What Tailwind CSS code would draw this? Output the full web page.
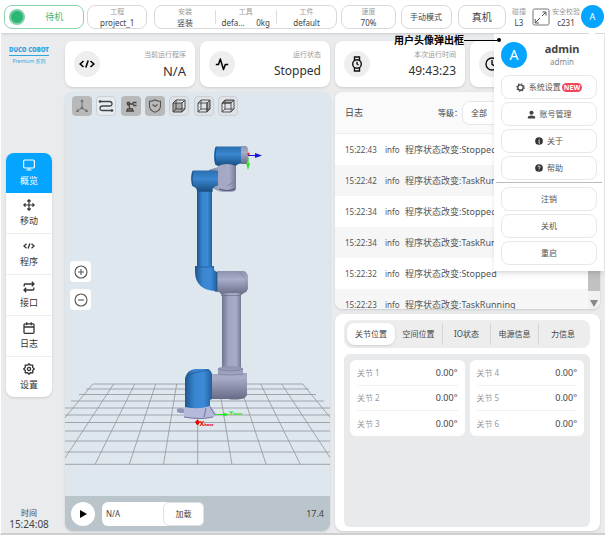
<!DOCTYPE html>
<html lang="zh-CN">
<head>
    <meta charset="UTF-8">
    <meta name="viewport" content="width=device-width, initial-scale=1.0">
    <title>DUCO COBOT</title>
    <script src="https://cdn.jsdelivr.net/npm/@tailwindcss/browser@4"></script>
</head>
<body class="h-screen min-h-[480px] flex flex-col overflow-hidden bg-[#e9ebed] text-[#444] text-[9px] leading-3 font-['Noto_Sans','Noto_Sans_CJK_SC',sans-serif] border-l border-white border-b-2 border-b-[#cfcfcf]">
    <!-- Thanh trạng thái -->
    <header class="relative flex h-[33px] shrink-0 items-center bg-white pl-[3px] pr-px text-center shadow-sm">
        <div class="flex h-6 min-w-0 flex-[77] items-center rounded-lg border border-[#8fd3ae] pl-[4px]">
            <span class="size-4 shrink-0 rounded-full border-2 border-[#7fd0a8] bg-[#2bb673]"></span>
            <span class="flex-1 text-[#3fb67c]">待机</span>
        </div>
        <div class="ml-[3px] flex h-6 min-w-0 flex-[60] flex-col justify-center rounded-lg border border-[#d9d9d9] leading-[11px]">
            <span class="text-[7px] text-[#999]">工程</span>
            <span class="text-[8px]">project_1</span>
        </div>
        <div class="ml-[7px] flex h-6 min-w-0 flex-[188] items-center rounded-lg border border-[#d9d9d9] leading-[11px]">
            <div class="flex flex-1 flex-col">
                <span class="text-[7px] text-[#999]">安装</span>
                <span class="text-[8px]">竖装</span>
            </div>
            <span class="h-[14px] w-px bg-[#ddd]"></span>
            <div class="flex flex-1 flex-col">
                <span class="text-[7px] text-[#999]">工具</span>
                <span class="flex justify-around text-[8px]"><span>defa...</span><span>0kg</span></span>
            </div>
            <span class="h-[14px] w-px bg-[#ddd]"></span>
            <div class="flex flex-1 flex-col">
                <span class="text-[7px] text-[#999]">工件</span>
                <span class="text-[8px]">default</span>
            </div>
        </div>
        <div class="ml-[4px] flex h-6 min-w-0 flex-[54] flex-col justify-center rounded-lg border border-[#d9d9d9] leading-[11px]">
            <span class="text-[7px] text-[#999]">速度</span>
            <span class="text-[8px]">70%</span>
        </div>
        <button class="ml-[5px] h-6 min-w-0 flex-[51] whitespace-nowrap rounded-lg border border-[#d9d9d9] text-[8px]">手动模式</button>
        <button class="ml-[6px] h-6 min-w-0 flex-[48] whitespace-nowrap rounded-lg border border-[#d9d9d9] text-[10px]">真机</button>
        <div class="ml-[5px] flex w-4 flex-col whitespace-nowrap leading-[11px]">
            <span class="text-[7px] text-[#999]">碰撞</span>
            <span class="text-[8px]">L3</span>
        </div>
        <svg class="ml-[5px] size-[18px] shrink-0" viewBox="0 0 18 18" fill="none" stroke="#555">
            <rect x="1" y="1" width="16" height="16" rx="1.5" stroke="#777" />
            <path d="M10 8l4-4M10.500 4H14v3.500M8 10l-5 5M3.200 11v4H7" />
        </svg>
        <div class="ml-px flex w-[30px] flex-col whitespace-nowrap leading-[11px]">
            <span class="text-[7px] text-[#999]">安全校验</span>
            <span class="text-[8px]">c231</span>
        </div>
        <button class="size-[23px] shrink-0 rounded-full bg-[#05a5ff] text-[9px] text-white">A</button>

        <!-- Menu người dùng -->
        <div class="absolute right-px top-[34px] z-20 w-[110px] bg-white shadow-md">
            <span class="absolute right-2 top-[-2px] size-2 rotate-45 bg-white"></span>
            <div class="absolute right-[103px] top-0 flex items-center whitespace-nowrap text-[10px] font-bold text-black">
                用户头像弹出框
                <span class="h-px w-[33px] bg-black"></span>
                <span class="size-1 rounded-full bg-black"></span>
            </div>
            <div class="flex items-center px-[7px] pt-[7px]">
                <span class="flex size-[26px] items-center justify-center rounded-full bg-[#05a5ff] text-[14px] text-white">A</span>
                <div class="flex-1">
                    <p class="text-[11px] font-bold leading-[15px]">admin</p>
                    <p class="text-[8px] text-[#888]">admin</p>
                </div>
            </div>
            <div class="flex flex-col gap-[3px] px-[7px] pt-[7px] pb-[2px] text-[8px] text-[#555]">
                <button class="flex h-6 items-center justify-center gap-1 rounded-lg border border-[#e6e8eb]">
                    <svg class="size-[9px]" viewBox="0 0 10 10" fill="none" stroke="#444"><circle cx="5" cy="5" r="3" stroke-width="1.500" /><circle cx="5" cy="5" r="4.200" stroke-width="1.200" stroke-dasharray="1.500 1.800" /></svg>
                    <span>系统设置</span>
                    <span class="-ml-[3px] rounded-full bg-[#f5455c] px-[2px] text-[7px] font-bold leading-[9px] text-white">NEW</span>
                </button>
                <button class="flex h-6 items-center justify-center gap-1 rounded-lg border border-[#e6e8eb]">
                    <svg class="size-[9px]" viewBox="0 0 10 10" fill="#444"><circle cx="5" cy="3" r="2.300" /><path d="M1 9.500V8q0-2 4-2t4 2v1.500z" /></svg>
                    <span>账号管理</span>
                </button>
                <button class="flex h-6 items-center justify-center gap-1 rounded-lg border border-[#e6e8eb]">
                    <svg class="size-[8px]" viewBox="0 0 10 10"><circle cx="5" cy="5" r="4.800" fill="#333" /><path d="M5.500 2v1.200M4.200 4.500h1.200L5 7.800h1" stroke="#fff" fill="none" /></svg>
                    <span>关于</span>
                </button>
                <button class="flex h-6 items-center justify-center gap-1 rounded-lg border border-[#e6e8eb]">
                    <svg class="size-[8px]" viewBox="0 0 10 10"><circle cx="5" cy="5" r="4.800" fill="#333" /><path d="M3.500 4q0-1.500 1.500-1.500T6.500 4Q6.500 4.800 5 5.300v.7M5 7v1" stroke="#fff" fill="none" /></svg>
                    <span>帮助</span>
                </button>
            </div>
            <hr class="mx-0.5 border-[#bbb]">
            <div class="flex flex-col gap-[3px] px-[7px] pt-[4px] pb-[6px] text-[8px] text-[#555]">
                <button class="h-6 rounded-lg border border-[#e6e8eb]">注销</button>
                <button class="h-6 rounded-lg border border-[#e6e8eb]">关机</button>
                <button class="h-6 rounded-lg border border-[#e6e8eb]">重启</button>
            </div>
        </div>
    </header>

    <div class="flex min-h-0 flex-1">
        <!-- Thanh bên -->
        <aside class="flex w-16 shrink-0 flex-col items-center justify-between pt-[13px] pb-[3px] pr-2">
            <div class="text-center text-[#2ea5df]">
                <p class="border-b border-[#2ea5df] whitespace-nowrap text-[6px] font-black leading-[9px]">DUCO COBOT</p>
                <p class="whitespace-nowrap text-[5px] leading-[11px]">Premium 系列</p>
            </div>
            <nav class="mb-6 w-[46px] overflow-hidden rounded-lg bg-white text-center text-[#333] shadow-sm">
                <a href="#" class="flex h-10 flex-col items-center justify-center gap-1 bg-[#05a5ff] text-white">
                    <svg class="size-3" viewBox="0 0 12 12" fill="none" stroke="currentColor" stroke-width="1.200"><rect x=".6" y="1" width="10.800" height="8" rx="1.200" /><path d="M6 9v2M3.500 11h5" /></svg>
                    概览
                </a>
                <a href="#" class="flex h-[41px] flex-col items-center justify-center gap-1 border-b border-[#eee]">
                    <svg class="size-3" viewBox="0 0 12 12" fill="none" stroke="currentColor" stroke-width="1.200"><path d="M6 .8v10.400M.8 6h10.400M4.300 2.500L6 .8l1.700 1.700M4.300 9.500L6 11.200l1.700-1.700M2.500 4.300L.8 6l1.700 1.700M9.500 4.300L11.200 6 9.500 7.700" /></svg>
                    移动
                </a>
                <a href="#" class="flex h-[41px] flex-col items-center justify-center gap-1 border-b border-[#eee]">
                    <svg class="size-3" viewBox="0 0 12 12" fill="none" stroke="currentColor" stroke-width="1.300"><path d="M3.500 3.800L.9 6l2.600 2.200M8.500 3.800L11.100 6 8.500 8.200M6.900 3.500l-1.800 5" /></svg>
                    程序
                </a>
                <a href="#" class="flex h-[41px] flex-col items-center justify-center gap-1 border-b border-[#eee]">
                    <svg class="size-3" viewBox="0 0 12 12" fill="none" stroke="currentColor" stroke-width="1.300"><path d="M1.200 5.500V3.800q0-.8.8-.8h9M8.800.8L11 3 8.800 5.200M10.800 6.500v1.700q0 .8-.8.800H1M3.200 6.800L1 9l2.200 2.200" /></svg>
                    接口
                </a>
                <a href="#" class="flex h-[41px] flex-col items-center justify-center gap-1 border-b border-[#eee]">
                    <svg class="size-3" viewBox="0 0 12 12" fill="none" stroke="currentColor" stroke-width="1.300"><rect x="1" y="1.800" width="10" height="9.500" rx="1" /><path d="M1 5h10M3.800.3v3M8.200.3v3" /></svg>
                    日志
                </a>
                <a href="#" class="flex h-10 flex-col items-center justify-center gap-1">
                    <svg class="size-3" viewBox="0 0 12 12" fill="none" stroke="currentColor" stroke-width="1.300"><path d="M6 .7l1.400 1.500 2.300-.1-.1 2.300L11.300 6 9.700 7.500l.1 2.300-2.400-.1L6 11.300 4.600 9.700l-2.400.1.100-2.300L.7 6l1.600-1.600-.1-2.300 2.400.1z" stroke-linejoin="round" /><circle cx="6" cy="6" r="1.600" /></svg>
                    设置
                </a>
            </nav>
            <div class="text-center">
                <p class="text-[8px]">时间</p>
                <p class="text-[10px] leading-[11px]">15:24:08</p>
            </div>
        </aside>

        <main class="flex min-w-0 flex-1 flex-col gap-[5px] pt-2 pr-[5px] pb-[2px]">
            <!-- Thẻ thông tin -->
            <section class="grid shrink-0 grid-cols-4 gap-[5px]">
                <div class="flex h-[46px] items-center justify-between rounded-lg bg-white px-[9px] shadow-sm">
                    <span class="flex size-[26px] items-center justify-center rounded-full bg-[#eee]">
                        <svg class="size-4" viewBox="0 0 16 16" fill="none" stroke="#000" stroke-width="1.600"><path d="M4.500 5L1.200 8l3.300 3M11.500 5l3.300 3-3.300 3M9.200 4.500l-2.400 7" /></svg>
                    </span>
                    <div class="text-right">
                        <p class="text-[7px] text-[#999]">当前运行程序</p>
                        <p class="mt-[2px] text-[13px] leading-4 text-[#333]">N/A</p>
                    </div>
                </div>
                <div class="flex h-[46px] items-center justify-between rounded-lg bg-white px-[9px] shadow-sm">
                    <span class="flex size-[26px] items-center justify-center rounded-full bg-[#eee]">
                        <svg class="size-[14px]" viewBox="0 0 14 14" fill="none" stroke="#000" stroke-width="1.500"><path d="M.8 7.500h2.700L5.300 2l3.200 10.500 1.800-5h2.900" stroke-linejoin="round" /></svg>
                    </span>
                    <div class="text-right">
                        <p class="text-[7px] text-[#999]">运行状态</p>
                        <p class="mt-[2px] text-[12px] leading-4 text-[#333]">Stopped</p>
                    </div>
                </div>
                <div class="flex h-[46px] items-center justify-between rounded-lg bg-white px-[9px] shadow-sm">
                    <span class="flex size-[26px] items-center justify-center rounded-full bg-[#eee]">
                        <svg class="size-4" viewBox="0 0 16 16" fill="none" stroke="#111" stroke-width="1.400"><circle cx="8" cy="8" r="4.300" /><path d="M5.500 4.500V1h5v3.500M5.500 11.500V15h5v-3.500M8 5.800V8l1.500 1" /></svg>
                    </span>
                    <div class="text-right">
                        <p class="text-[7px] text-[#999]">本次运行时间</p>
                        <p class="mt-[2px] text-[12px] leading-4 text-[#333]">49:43:23</p>
                    </div>
                </div>
                <div class="flex h-[46px] items-center rounded-lg bg-white px-[9px] shadow-sm">
                    <span class="flex size-[26px] items-center justify-center rounded-full bg-[#eee]">
                        <svg class="size-[14px]" viewBox="0 0 14 14" fill="none" stroke="#111" stroke-width="1.400"><circle cx="7" cy="7" r="6" /><path d="M7 3v4.300l2.500 1.500" /></svg>
                    </span>
                </div>
            </section>

            <section class="grid min-h-0 flex-1 grid-cols-2 gap-[5px]">
                <!-- Khung 3D -->
                <div class="relative flex min-h-0 flex-col overflow-hidden rounded-lg bg-[#dfe7ee] shadow-sm">
                    <svg class="min-h-0 w-full flex-1" viewBox="65 92 265 404" preserveAspectRatio="xMidYMid slice">
                        <defs>
                            <linearGradient id="blue"><stop offset="0" stop-color="#1b578f" /><stop offset=".35" stop-color="#3a85cf" /><stop offset=".7" stop-color="#3c8ad8" /><stop offset="1" stop-color="#20609c" /></linearGradient>
                            <linearGradient id="blueDown" x2="0" y2="1"><stop offset="0" stop-color="#286fae" /><stop offset=".4" stop-color="#3a87d0" /><stop offset="1" stop-color="#184f80" /></linearGradient>
                            <linearGradient id="gray"><stop offset="0" stop-color="#70758f" /><stop offset=".35" stop-color="#a2a6c2" /><stop offset=".75" stop-color="#a7abc8" /><stop offset="1" stop-color="#747992" /></linearGradient>
                            <linearGradient id="grayDown" x2="0" y2="1"><stop offset="0" stop-color="#8d92ad" /><stop offset=".35" stop-color="#a9adca" /><stop offset="1" stop-color="#666a84" /></linearGradient>
                        </defs>
                        <g stroke="#8f9499" stroke-width=".8">
                            <path d="M93 384H303M86 389H309M79 394.500H316M71 401H324M63 408H332M55 415H340M55 422.500H340M55 431H340M55 441H340M55 452H340M55 464.300H340" />
                            <path d="M92.700 384L26.700 464.300M113.700 384L60.900 464.300M134.700 384L95.100 464.300M155.700 384L129.300 464.300M176.700 384L163.500 464.300M197.700 384V464.300M218.700 384L231.900 464.300M239.700 384L266.100 464.300M260.700 384L300.300 464.300M281.700 384L334.500 464.300M302.700 384L368.700 464.300" />
                        </g>
                        <!-- cổ tay -->
                        <path d="M241 146h5q2.500 1 2.500 9t-2.500 9h-5z" fill="url(#grayDown)" />
                        <path d="M218 162h18v27q-1 3-6 3h-8q-6-1-10-5l-3-1v-16l9-3z" fill="url(#gray)" />
                        <path d="M219 189q8 3 16 0" stroke="#555a72" stroke-width="1.200" fill="none" />
                        <path d="M227 186l7-4" stroke="#6f748e" stroke-width=".6" />
                        <path d="M216 146.500h25v17q-4 .5-5 2.500-9-4-18 0l-2-1q-2-2-2-9t2-9.500z" fill="url(#blueDown)" />
                        <path d="M216 147q-2 8 0 18" stroke="#1c5388" fill="none" />
                        <!-- cánh tay trên -->
                        <path d="M197 190h15v78h-15z" fill="url(#blue)" />
                        <path d="M193 170.500h25v15q-5 0-6 6h-15q0-4-4-5-2-2-2-8t2-8z" fill="url(#blueDown)" />
                        <path d="M193 171q-2 8 0 15M197 191h16" stroke="#1c5388" fill="none" />
                        <path d="M217 271h27q3 1 4 5v13q-1 3-4 4l-3 2h-19l-3-3h-4z" fill="url(#grayDown)" />
                        <path d="M195 266h19v3q0 2 3 3v19h-3q-18-2-19-18z" fill="url(#blue)" />
                        <path d="M195 267h19M217 272v19" stroke="#1c5388" stroke-width=".7" />
                        <path d="M238 271l8 8v11" stroke="#7b8099" stroke-width=".6" fill="none" />
                        <!-- cánh tay dưới -->
                        <path d="M222 293h19v76h-19z" fill="url(#gray)" />
                        <path d="M221 295.500h20" stroke="#6b708a" stroke-width=".7" />
                        <path d="M211 374h7v-6q13-4 25 0v5h4v22q-2 4-6 4-7 1-13 0h-17z" fill="url(#grayDown)" />
                        <path d="M218 369q12 4 25 0M218 374q12 2 25 0" stroke="#777c96" stroke-width=".7" fill="none" />
                        <!-- đế -->
                        <path d="M177 409l3-1 5 1v4h-5l-3-1z" fill="#8f95bb" />
                        <path d="M185 406h26l5 8q0 3-4 3-12 3-28 0v-6z" fill="#b5b9da" />
                        <path d="M184 417q16 3 29 0M206 408l-2 9M210 407l5 8" stroke="#70769a" fill="none" />
                        <path d="M185 407v-29q2-8 10-9h13q3 1 4 5v25l-2 1v6q-12 4-25 1z" fill="url(#blue)" />
                        <path d="M187 376q7-4 22-6" stroke="#1c5388" stroke-width=".6" fill="none" />
                        <!-- trục toạ độ -->
                        <path d="M248 155.500h8" stroke="#1515e0" stroke-width="1.200" /><path d="M255 153l7 2.500-7 2.500z" fill="#1515e0" />
                        <path d="M248 158v5" stroke="#2ee02e" stroke-width="1.200" /><path d="M246 163h4l-2 7z" fill="#2ee02e" />
                        <circle cx="248.500" cy="154" r="1.200" fill="#e22" />
                        <path d="M215 414.500h10" stroke="#1fe81f" /><path d="M223 412.500l6 2-6 2z" fill="#1fe81f" />
                        <path d="M197.500 420v5M195.500 422l2-2 2 2-2 3z" stroke="#e00" fill="#e00" />
                        <text x="229" y="415" font-size="6" font-weight="bold" fill="#1fe81f">Y<tspan font-size="4">base</tspan></text>
                        <text x="199.500" y="426" font-size="7" font-weight="bold" fill="#e00">X<tspan font-size="4">base</tspan></text>
                    </svg>

                    <!-- Công cụ hiển thị -->
                    <div class="absolute left-[7px] top-1 flex gap-1">
                        <button class="flex size-5 items-center justify-center rounded-sm bg-[#b9b9b9]" aria-label="坐标系"><svg class="size-4" viewBox="0 0 16 16" fill="none" stroke="#666" stroke-width=".9"><path d="M8 2v8l-5 3M8 10l5 3M6.800 4L8 1.800 9.200 4M3.500 11.300L2.500 13.500h2.300M12.500 11.300l1 2.200h-2.300" /><circle cx="8" cy="10" r="1" /></svg></button>
                        <button class="flex size-5 items-center justify-center rounded-sm border border-[#cbd0d5] bg-[#e6ebf0]" aria-label="轨迹"><svg class="size-4 shrink-0" viewBox="0 0 16 16" fill="none" stroke="#444" stroke-width="1.300"><path d="M2 3.500h9.500q2.500 0 2.500 2.300T11.500 8h-7Q2 8 2 10.300t2.500 2.200H14" /><circle cx="2" cy="3.500" r=".7" fill="#444" /><circle cx="14" cy="12.500" r=".7" fill="#444" /></svg></button>
                        <button class="ml-px flex size-5 items-center justify-center rounded-sm bg-[#b9b9b9]" aria-label="机器人"><svg class="size-3" viewBox="0 0 12 12" fill="none" stroke="#444" stroke-width="1.300"><path d="M1 11h8M2.500 11V9h5v2M5 9L3.500 4h4l1-1.500h3M8 4l1 1.500h2.500" /><circle cx="3.500" cy="3.500" r="1.300" /></svg></button>
                        <button class="flex size-5 items-center justify-center rounded-sm bg-[#b9b9b9]" aria-label="安全"><svg class="size-[14px]" viewBox="0 0 14 14" fill="none" stroke="#555" stroke-width="1.100"><path d="M7 .8q2.500 1.700 5.500 1.400V7q0 4.500-5.500 6.200Q1.500 11.500 1.500 7V2.200Q4.500 2.500 7 .8zM4.500 5.500L7 7.500l2.500-2" /></svg></button>
                        <button class="flex size-5 items-center justify-center rounded-sm border border-[#cbd0d5] bg-[#dfe3e7]" aria-label="正视"><svg class="size-[14px] shrink-0" viewBox="0 0 14 14" fill="none" stroke="#444"><path d="M1 4h9v9H1z" fill="#aaa" /><path d="M1 4l3-3h9v9l-3 3M10 4l3-3M4 1v9h9M4 10l-3 3" /></svg></button>
                        <button class="ml-px flex size-5 items-center justify-center rounded-sm border border-[#cbd0d5] bg-[#dfe3e7]" aria-label="侧视"><svg class="size-[14px] shrink-0" viewBox="0 0 14 14" fill="none" stroke="#444"><path d="M10 4l3-3v9l-3 3z" fill="#aaa" /><path d="M1 4h9v9H1zM1 4l3-3h9M4 1v9h9M4 10l-3 3" stroke-width=".9" /></svg></button>
                        <button class="flex size-5 items-center justify-center rounded-sm border border-[#cbd0d5] bg-[#dfe3e7]" aria-label="俯视"><svg class="size-[14px] shrink-0" viewBox="0 0 14 14" fill="none" stroke="#444"><path d="M1 4l3-3h9l-3 3z" fill="#aaa" /><path d="M1 4h9v9H1zM13 1v9l-3 3M4 1v9h9M4 10l-3 3" stroke-width=".9" /></svg></button>
                    </div>
                    <div class="absolute left-[5px] top-[169px] flex flex-col gap-[7px]">
                        <button class="flex size-[21px] items-center justify-center rounded-sm bg-white" aria-label="放大"><svg class="size-[14px]" viewBox="0 0 14 14" fill="none" stroke="#555" stroke-width="1.100"><circle cx="7" cy="7" r="6" /><path d="M7 4v6M4 7h6" /></svg></button>
                        <button class="flex size-[21px] items-center justify-center rounded-sm bg-white" aria-label="缩小"><svg class="size-[14px]" viewBox="0 0 14 14" fill="none" stroke="#555" stroke-width="1.100"><circle cx="7" cy="7" r="6" /><path d="M4 7h6" /></svg></button>
                    </div>

                    <div class="flex h-[35px] shrink-0 items-center bg-[#bac4cb] px-1.5">
                        <button class="flex size-6 shrink-0 items-center justify-center rounded-full bg-white" aria-label="运行"><svg class="size-2" viewBox="0 0 8 8"><path d="M1 0l7 4-7 4z" /></svg></button>
                        <div class="ml-[7px] flex h-6 w-[102px] rounded-md bg-white">
                            <input type="text" value="N/A" aria-label="程序" class="min-w-0 flex-1 px-1 text-[8px] outline-none">
                            <button class="w-[41px] rounded-md border border-[#dde2ea] text-[8px]">加载</button>
                        </div>
                        <span class="ml-auto text-[9px]">17.4</span>
                    </div>
                </div>

                <div class="grid min-h-0 grid-rows-2 gap-[5px]">
                    <!-- Nhật ký -->
                    <div class="flex min-h-0 flex-col overflow-hidden rounded-lg bg-white shadow-sm">
                        <div class="flex h-[42px] shrink-0 items-center border-b border-[#eee] bg-[#fafafa] px-[10px]">
                            <h2 class="text-[9px]">日志</h2>
                            <label for="level" class="ml-auto text-[8px]">等级：</label>
                            <select id="level" class="h-6 w-32 appearance-none rounded-lg border border-[#e4e6ea] bg-white pl-2 text-[8px]">
                                <option>全部</option>
                            </select>
                        </div>
                        <div class="flex min-h-0 flex-1">
                            <ul class="min-w-0 flex-1 overflow-hidden text-[8px] text-[#555]">
                                <li class="flex h-[31px] items-center px-[10px]"><span class="w-10">15:22:43</span><span class="w-5">info</span><span class="text-[9px]">程序状态改变:Stopped</span></li>
                                <li class="flex h-[31px] items-center bg-[#f6f6f6] px-[10px]"><span class="w-10">15:22:42</span><span class="w-5">info</span><span class="text-[9px]">程序状态改变:TaskRunning</span></li>
                                <li class="flex h-[31px] items-center px-[10px]"><span class="w-10">15:22:34</span><span class="w-5">info</span><span class="text-[9px]">程序状态改变:Stopped</span></li>
                                <li class="flex h-[31px] items-center bg-[#f6f6f6] px-[10px]"><span class="w-10">15:22:34</span><span class="w-5">info</span><span class="text-[9px]">程序状态改变:TaskRunning</span></li>
                                <li class="flex h-[31px] items-center px-[10px]"><span class="w-10">15:22:32</span><span class="w-5">info</span><span class="text-[9px]">程序状态改变:Stopped</span></li>
                                <li class="flex h-[31px] items-center bg-[#f6f6f6] px-[10px]"><span class="w-10">15:22:23</span><span class="w-5">info</span><span class="text-[9px]">程序状态改变:TaskRunning</span></li>
                            </ul>
                            <div class="flex w-3 flex-col items-center bg-[#f1f1f1]">
                                <span class="mb-[9px] w-full flex-1 bg-[#c1c1c1]"></span>
                                <svg class="mb-[2px] h-[7px] w-2" viewBox="0 0 8 7"><path d="M0 0h8L4 7z" fill="#888" /></svg>
                            </div>
                        </div>
                    </div>

                    <!-- Vị trí khớp -->
                    <div class="flex min-h-0 flex-col gap-1.5 rounded-lg bg-white pt-1.5 pr-[10px] pb-1 pl-[9px] shadow-sm">
                        <div class="grid h-7 shrink-0 grid-cols-5 items-center rounded-lg bg-[#ededed] px-[3px] text-[8px]">
                            <button class="h-[22px] rounded-lg bg-white shadow">关节位置</button>
                            <button class="h-[22px] border-r border-[#d4d4d4]">空间位置</button>
                            <button class="h-[22px] border-r border-[#d4d4d4]">IO状态</button>
                            <button class="h-[22px] border-r border-[#d4d4d4]">电源信息</button>
                            <button class="h-[22px]">力信息</button>
                        </div>
                        <div class="grid min-h-0 flex-1 grid-cols-2 items-start gap-[5px] rounded-md bg-[#e9eaec] p-1.5">
                            <dl class="rounded-md bg-white px-[7px]">
                                <div class="flex h-[26px] items-center justify-between border-b border-[#f0f1f5]"><dt class="text-[8px] text-[#999]">关节 1</dt><dd>0.00°</dd></div>
                                <div class="flex h-[25px] items-center justify-between border-b border-[#f0f1f5]"><dt class="text-[8px] text-[#999]">关节 2</dt><dd>0.00°</dd></div>
                                <div class="flex h-[25px] items-center justify-between"><dt class="text-[8px] text-[#999]">关节 3</dt><dd>0.00°</dd></div>
                            </dl>
                            <dl class="rounded-md bg-white px-[7px]">
                                <div class="flex h-[26px] items-center justify-between border-b border-[#f0f1f5]"><dt class="text-[8px] text-[#999]">关节 4</dt><dd>0.00°</dd></div>
                                <div class="flex h-[25px] items-center justify-between border-b border-[#f0f1f5]"><dt class="text-[8px] text-[#999]">关节 5</dt><dd>0.00°</dd></div>
                                <div class="flex h-[25px] items-center justify-between"><dt class="text-[8px] text-[#999]">关节 6</dt><dd>0.00°</dd></div>
                            </dl>
                        </div>
                    </div>
                </div>
            </section>
        </main>
    </div>
</body>
</html>
